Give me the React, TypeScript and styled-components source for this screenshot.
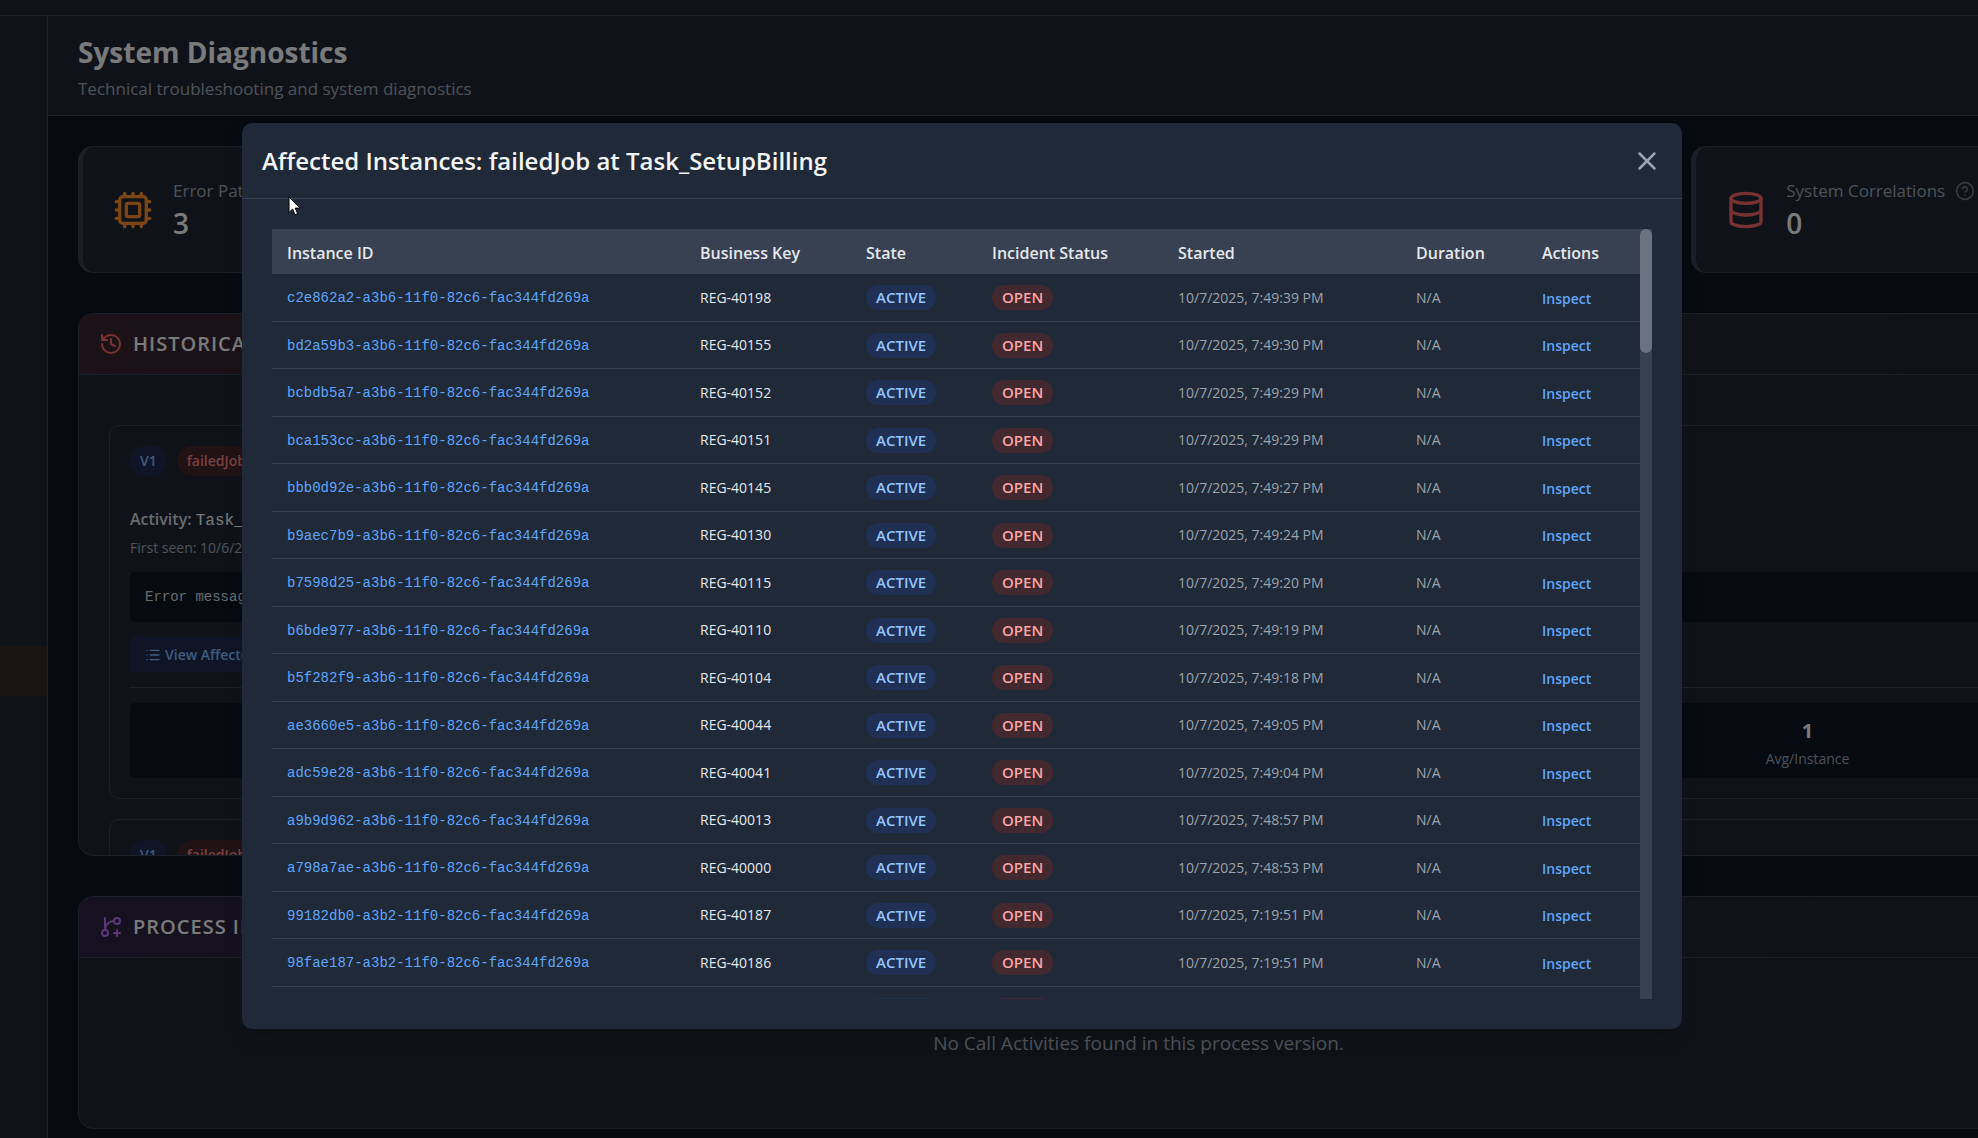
import React from "react";
import styled, { createGlobalStyle, css } from "styled-components";
import {
  CircleHelp,
  Cpu,
  Database,
  GitBranchPlus,
  History,
  List,
  X,
} from "lucide-react";

const sans = `"Segoe UI", "Open Sans", "Noto Sans", sans-serif`;
const mono = `Consolas, "Liberation Mono", monospace`;

const color = {
  page: "#0d1625",
  panel: "#1e2732",
  line: "#374151",
  text: "#f3f4f6",
  muted: "#9ca3af",
  link: "#60a5fa",
};

const GlobalStyle = createGlobalStyle`
  *, *::before, *::after { box-sizing: border-box; }
  body {
    margin: 0;
    background: ${color.page};
    color: ${color.text};
    font-family: ${sans};
    font-size: 16px;
  }
  h1, h2, h3, p, dl, dd { margin: 0; }
  button { font-family: inherit; cursor: pointer; }
`;

const Viewport = styled.div`
  height: 100vh;
  overflow: hidden;
`;

/* The workspace runs past both sides of the visible area. */
const Workspace = styled.div`
  position: relative;
  display: flex;
  flex-direction: column;
  height: 100%;
  margin: 0 -264px 0 -318px;
`;

const TopBar = styled.div`
  flex: none;
  height: 16px;
  background: ${color.panel};
  border-bottom: 1px solid ${color.line};
`;

const Columns = styled.div`
  flex: 1;
  min-height: 0;
  display: grid;
  grid-template-columns: 366px minmax(0, 1fr);
`;

const Sidebar = styled.nav`
  padding-top: 630px;
  background: ${color.panel};
  border-right: 1px solid ${color.line};
`;

const ActiveItem = styled.div`
  height: 50px;
  background: #302a29;
`;

const Main = styled.main`
  overflow: hidden;
`;

const PageHeader = styled.header`
  height: 100px;
  padding: 16px 30px 0;
  background: ${color.panel};
  border-bottom: 1px solid ${color.line};
`;

const PageTitle = styled.h1`
  font-size: 28px;
  line-height: 40px;
  font-weight: 700;
`;

const PageSubtitle = styled.p`
  padding-top: 5px;
  color: ${color.muted};
  font-size: 17px;
  line-height: 24px;
`;

const Content = styled.div`
  display: flex;
  flex-direction: column;
  gap: 40px;
  padding: 30px 43px 30px 30px;
`;

const Metrics = styled.div`
  display: grid;
  grid-template-columns: repeat(4, minmax(0, 1fr));
  gap: 30px;
`;

const MetricCard = styled.section`
  display: flex;
  align-items: center;
  gap: 20px;
  height: 127px;
  padding: 0 30px;
  background: ${color.panel};
  border: 1px solid ${color.line};
  border-left-width: 5px;
  border-radius: 15px;
`;

const MetricText = styled.div`
  display: flex;
  flex-direction: column;
  padding-top: 2px;
`;

const MetricLabel = styled.div`
  display: flex;
  align-items: center;
  gap: 10px;
  color: ${color.muted};
  font-size: 17px;
  line-height: 25px;
  font-weight: 500;
`;

const MetricValue = styled.div`
  font-size: 28px;
  line-height: 40px;
  font-weight: 600;
`;

const Panel = styled.section<{ $height: number }>`
  display: flex;
  flex-direction: column;
  height: ${(p) => p.$height}px;
  background: ${color.panel};
  border: 1px solid ${color.line};
  border-radius: 15px;
  overflow: hidden;
`;

const PanelHeader = styled.header<{ $tint: string }>`
  flex: none;
  display: flex;
  align-items: center;
  gap: 10px;
  height: 61px;
  padding: 0 20px;
  background: linear-gradient(90deg, ${(p) => p.$tint}, ${color.panel} 90%);
  border-bottom: 1px solid ${color.line};
`;

const PanelTitle = styled.h2`
  font-size: 20px;
  line-height: 30px;
  font-weight: 600;
  letter-spacing: 1px;
  text-transform: uppercase;
`;

const PatternList = styled.div`
  flex: none;
  display: flex;
  flex-direction: column;
  gap: 20px;
  padding: 50px 30px 30px;
`;

const Pattern = styled.article`
  display: flex;
  flex-direction: column;
  padding: 20px;
  border: 1px solid ${color.line};
  border-radius: 10px;
`;

const ChipRow = styled.div`
  display: flex;
  gap: 10px;
`;

const Chip = styled.span<{ $tone: "blue" | "red" }>`
  padding: 0 10px;
  border-radius: 15px;
  font-size: 14px;
  line-height: 30px;
  font-weight: 600;
  ${(p) =>
    p.$tone === "blue"
      ? css`
          background: #1f2b4f;
          color: #7fb4f5;
        `
      : css`
          background: #40242a;
          color: #f08080;
        `}
`;

const Activity = styled.h3`
  height: 28px;
  margin-top: 29px;
  font-size: 16px;
  line-height: 28px;
  font-weight: 600;
  color: #d1d5db;

  code {
    font-family: ${mono};
    font-size: 16px;
    font-weight: 400;
    color: ${color.text};
  }
`;

const FirstSeen = styled.p`
  color: ${color.muted};
  font-size: 14px;
  line-height: 30px;
`;

const ErrorMessage = styled.code`
  margin-top: 9px;
  padding: 0 15px;
  background: ${color.page};
  border-radius: 5px;
  color: #d1d5db;
  font-family: ${mono};
  font-size: 14px;
  line-height: 50px;
`;

const ViewButton = styled.button`
  align-self: flex-start;
  display: flex;
  align-items: center;
  gap: 4px;
  height: 35px;
  margin-top: 15px;
  padding: 0 15px;
  border: 0;
  border-radius: 5px;
  background: #1f2b4f;
  color: #7fb4f5;
  font-size: 14px;
  font-weight: 600;
`;

const StatArea = styled.div`
  margin-top: 15px;
  padding-top: 15px;
  border-top: 1px solid ${color.line};
`;

const Stats = styled.dl`
  display: grid;
  grid-template-columns: repeat(3, minmax(0, 1fr));
  gap: 20px;
  height: 75px;
  padding: 13px 15px 0;
  background: ${color.page};
  border-radius: 5px;
  text-align: center;
`;

const Stat = styled.div`
  display: flex;
  flex-direction: column-reverse;
  justify-content: flex-end;

  dt {
    color: ${color.muted};
    font-size: 14px;
    line-height: 26px;
  }

  dd {
    font-size: 20px;
    line-height: 30px;
    font-weight: 700;
  }
`;

const EmptyNote = styled.p`
  flex: 1;
  display: flex;
  align-items: center;
  justify-content: center;
  color: ${color.muted};
  font-size: 19px;
  line-height: 28px;
`;

const Backdrop = styled.div`
  position: absolute;
  inset: 0;
  display: flex;
  align-items: center;
  justify-content: center;
  padding-top: 14px;
  background: rgba(0, 0, 0, 0.5);
`;

const Dialog = styled.div`
  display: flex;
  flex-direction: column;
  width: 90%;
  max-width: 1440px;
  height: 906px;
  max-height: calc(100vh - 60px);
  background: #1f2937;
  border-radius: 10px;
  box-shadow: 0 12px 18px rgba(0, 0, 0, 0.1);
`;

const DialogHeader = styled.header`
  flex: none;
  display: flex;
  align-items: center;
  justify-content: space-between;
  height: 76px;
  padding: 0 20px;
  border-bottom: 1px solid ${color.line};
`;

const DialogTitle = styled.h2`
  font-size: 24px;
  line-height: 36px;
  font-weight: 600;
`;

const CloseButton = styled.button`
  display: flex;
  padding: 0;
  border: 0;
  background: none;
  color: ${color.muted};
`;

const DialogBody = styled.div`
  flex: 1;
  min-height: 0;
  display: grid;
  grid-template-columns: minmax(0, 1fr) 12px;
  margin: 30px;
`;

const TableClip = styled.div`
  min-height: 0;
  overflow: hidden;
`;

const Track = styled.div`
  background: ${color.line};
`;

const Thumb = styled.div`
  height: 124px;
  border-radius: 6px;
  background: #6b7280;
`;

const Table = styled.table`
  width: 100%;
  table-layout: fixed;
  border-collapse: separate;
  border-spacing: 0;
  text-align: left;
`;

const Col = styled.col<{ $width: number }>`
  width: ${(p) => p.$width}px;
`;

const Th = styled.th`
  height: 45px;
  padding: 2px 15px 0;
  background: ${color.line};
  color: #e5e7eb;
  font-size: 16px;
  font-weight: 600;
  white-space: nowrap;
`;

const Row = styled.tr`
  height: 48px;

  &:nth-child(even) {
    height: 47px;
  }
`;

const Td = styled.td<{ $muted?: boolean }>`
  padding: 0 15px;
  border-bottom: 1px solid ${color.line};
  color: ${(p) => (p.$muted ? color.muted : "#e5e7eb")};
  font-size: 14px;
  line-height: 24px;
  white-space: nowrap;
`;

const InstanceLink = styled.a`
  color: ${color.link};
  font-family: ${mono};
  font-size: 14px;
  text-decoration: none;
`;

const Badge = styled.span<{ $tone: "blue" | "red" }>`
  display: inline-block;
  padding: 0 10px;
  border-radius: 12px;
  font-size: 15px;
  line-height: 25px;
  font-weight: 600;
  vertical-align: middle;
  background: ${(p) => (p.$tone === "blue" ? "#1f3054" : "#42282f")};
  color: ${(p) => (p.$tone === "blue" ? "#93c5fd" : "#fca5a5")};
`;

const InspectButton = styled.button`
  padding: 2px 0 0;
  border: 0;
  background: none;
  color: ${color.link};
  font-size: 14px;
  line-height: 24px;
  font-weight: 600;
`;

const Pointer = styled.svg`
  position: absolute;
  top: 196px;
  left: 606px;
`;

const columns: [string, number][] = [
  ["Instance ID", 413],
  ["Business Key", 166],
  ["State", 126],
  ["Incident Status", 186],
  ["Started", 238],
  ["Duration", 126],
  ["Actions", 113],
];

const instances: [string, string, string][] = [
  ["c2e862a2-a3b6", "40198", "7:49:39"],
  ["bd2a59b3-a3b6", "40155", "7:49:30"],
  ["bcbdb5a7-a3b6", "40152", "7:49:29"],
  ["bca153cc-a3b6", "40151", "7:49:29"],
  ["bbb0d92e-a3b6", "40145", "7:49:27"],
  ["b9aec7b9-a3b6", "40130", "7:49:24"],
  ["b7598d25-a3b6", "40115", "7:49:20"],
  ["b6bde977-a3b6", "40110", "7:49:19"],
  ["b5f282f9-a3b6", "40104", "7:49:18"],
  ["ae3660e5-a3b6", "40044", "7:49:05"],
  ["adc59e28-a3b6", "40041", "7:49:04"],
  ["a9b9d962-a3b6", "40013", "7:48:57"],
  ["a798a7ae-a3b6", "40000", "7:48:53"],
  ["99182db0-a3b2", "40187", "7:19:51"],
  ["98fae187-a3b2", "40186", "7:19:51"],
];

function PatternChips() {
  return (
    <ChipRow>
      <Chip $tone="blue">V1</Chip>
      <Chip $tone="red">failedJob</Chip>
    </ChipRow>
  );
}

export default function App() {
  return (
    <Viewport>
      <GlobalStyle />
      <Workspace>
        <TopBar />
        <Columns>
          <Sidebar>
            <ActiveItem />
          </Sidebar>
          <Main>
            <PageHeader>
              <PageTitle>System Diagnostics</PageTitle>
              <PageSubtitle>
                Technical troubleshooting and system diagnostics
              </PageSubtitle>
            </PageHeader>
            <Content>
              <Metrics>
                <MetricCard>
                  <Cpu size={40} color="#f98b2b" />
                  <MetricText>
                    <MetricLabel>Error Patterns</MetricLabel>
                    <MetricValue>3</MetricValue>
                  </MetricText>
                </MetricCard>
                <MetricCard />
                <MetricCard />
                <MetricCard>
                  <Database size={40} color="#f06464" />
                  <MetricText>
                    <MetricLabel>
                      System Correlations
                      <CircleHelp size={20} color="#6b7280" />
                    </MetricLabel>
                    <MetricValue>0</MetricValue>
                  </MetricText>
                </MetricCard>
              </Metrics>
              <Panel $height={543}>
                <PanelHeader $tint="#38242e">
                  <History size={24} color="#f06464" />
                  <PanelTitle>Historical</PanelTitle>
                </PanelHeader>
                <PatternList>
                  <Pattern>
                    <PatternChips />
                    <Activity>
                      Activity: <code>Task_SetupBilling</code>
                    </Activity>
                    <FirstSeen>First seen: 10/6/2025</FirstSeen>
                    <ErrorMessage>Error message</ErrorMessage>
                    <ViewButton type="button">
                      <List size={16} />
                      View Affected
                    </ViewButton>
                    <StatArea>
                      <Stats>
                        <Stat />
                        <Stat />
                        <Stat>
                          <dt>Avg/Instance</dt>
                          <dd>1</dd>
                        </Stat>
                      </Stats>
                    </StatArea>
                  </Pattern>
                  <Pattern>
                    <PatternChips />
                  </Pattern>
                </PatternList>
              </Panel>
              <Panel $height={233}>
                <PanelHeader $tint="#2c2340">
                  <GitBranchPlus size={24} color="#b46cf0" />
                  <PanelTitle>Process In</PanelTitle>
                </PanelHeader>
                <EmptyNote>
                  No Call Activities found in this process version.
                </EmptyNote>
              </Panel>
            </Content>
          </Main>
        </Columns>
        <Backdrop>
          <Dialog role="dialog" aria-labelledby="dialog-title">
            <DialogHeader>
              <DialogTitle id="dialog-title">
                Affected Instances: failedJob at Task_SetupBilling
              </DialogTitle>
              <CloseButton type="button" aria-label="Close">
                <X size={30} />
              </CloseButton>
            </DialogHeader>
            <DialogBody>
              <TableClip>
                <Table>
                  <colgroup>
                    {columns.map(([name, width]) => (
                      <Col key={name} $width={width} />
                    ))}
                  </colgroup>
                  <thead>
                    <tr>
                      {columns.map(([name]) => (
                        <Th key={name}>{name}</Th>
                      ))}
                    </tr>
                  </thead>
                  <tbody>
                    {instances.map(([id, key, time]) => (
                      <Row key={id}>
                        <Td>
                          <InstanceLink href="#">
                            {id}-11f0-82c6-fac344fd269a
                          </InstanceLink>
                        </Td>
                        <Td>REG-{key}</Td>
                        <Td>
                          <Badge $tone="blue">ACTIVE</Badge>
                        </Td>
                        <Td>
                          <Badge $tone="red">OPEN</Badge>
                        </Td>
                        <Td $muted>10/7/2025, {time} PM</Td>
                        <Td $muted>N/A</Td>
                        <Td>
                          <InspectButton type="button">Inspect</InspectButton>
                        </Td>
                      </Row>
                    ))}
                    <Row>
                      <Td />
                      <Td />
                      <Td>
                        <Badge $tone="blue">ACTIVE</Badge>
                      </Td>
                      <Td>
                        <Badge $tone="red">OPEN</Badge>
                      </Td>
                      <Td />
                      <Td />
                      <Td />
                    </Row>
                  </tbody>
                </Table>
              </TableClip>
              <Track>
                <Thumb />
              </Track>
            </DialogBody>
          </Dialog>
        </Backdrop>
        <Pointer width="13" height="20" viewBox="0 0 13 20" aria-hidden="true">
          <path
            d="M1 1v15.5l3.6-3.4 2.4 5.6 2.6-1.1-2.4-5.5H12z"
            fill="#fff"
            stroke="#000"
          />
        </Pointer>
      </Workspace>
    </Viewport>
  );
}
